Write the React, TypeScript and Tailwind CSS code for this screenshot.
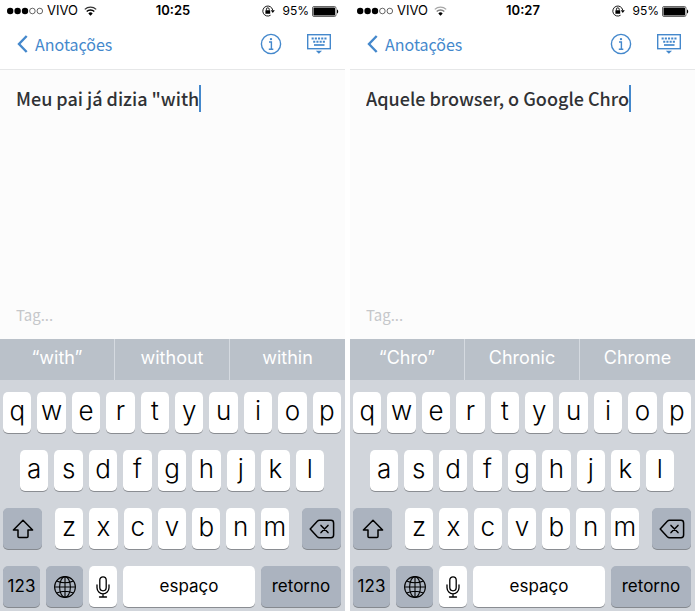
import { useState } from 'react'

const noteFont = "font-['Noto_Sans_CJK_SC','Noto_Sans',sans-serif]"

const phones = [
  {
    id: 'with',
    time: '10:25',
    note: 'Meu pai já dizia "with',
    suggestions: ['“with”', 'without', 'within'],
    weakSignal: false,
  },
  {
    id: 'chrome',
    time: '10:27',
    note: 'Aquele browser, o Google Chro',
    suggestions: ['“Chro”', 'Chronic', 'Chrome'],
    weakSignal: true,
  },
]

type PhoneData = (typeof phones)[number]

const SignalDots = () => (
  <svg width="37" height="8" viewBox="0 0 37 8" aria-hidden="true">
    <circle cx="3.2" cy="4" r="3.2" />
    <circle cx="10.6" cy="4" r="3.2" />
    <circle cx="18" cy="4" r="3.2" />
    <circle cx="25.4" cy="4" r="2.8" fill="none" stroke="black" strokeWidth="0.6" />
    <circle cx="32.8" cy="4" r="2.8" fill="none" stroke="black" strokeWidth="0.6" />
  </svg>
)

const WifiIcon = ({ weak }: { weak: boolean }) => (
  <svg width="13" height="10" viewBox="0 0 13 10" fill="none" stroke="black" aria-hidden="true">
    <path d="M0.8 3.4a8.2 8.2 0 0 1 11.4 0" strokeWidth="1.3" opacity={weak ? 0.35 : 0.8} />
    <path d="M2.7 5.6a5.4 5.4 0 0 1 7.6 0" strokeWidth="1.4" opacity={weak ? 0.5 : 1} />
    <path d="M4.3 7.4a3.2 3.2 0 0 1 4.4 0L6.5 9.7z" fill="black" stroke="none" />
  </svg>
)

const LockIcon = () => (
  <svg width="13" height="12" viewBox="0 0 13 12" aria-hidden="true">
    <path d="M10.7 5A5 5 0 1 0 8.6 10.2" fill="none" stroke="black" strokeWidth="0.9" />
    <path d="M8.8 5.2h4L10.8 8z" />
    <rect x="3.4" y="5.2" width="4.8" height="3.6" rx="0.4" />
    <path d="M4.4 5.4V4.2a1.4 1.4 0 0 1 2.8 0v1.2" fill="none" stroke="black" strokeWidth="0.9" />
  </svg>
)

const BatteryIcon = () => (
  <svg width="27" height="11" viewBox="0 0 27 11" aria-hidden="true">
    <rect x="0.5" y="0.5" width="23.5" height="10" rx="1.5" fill="none" stroke="black" strokeWidth="0.6" />
    <rect x="1.5" y="1.5" width="21.5" height="8" rx="0.6" />
    <path d="M25 3.5c1.6 0.4 1.6 3.6 0 4z" />
  </svg>
)

const BackIcon = () => (
  <svg width="11" height="18" viewBox="0 0 11 18" fill="none" stroke="currentColor" strokeWidth="2.4" aria-hidden="true">
    <path d="M9.7 1 2 9l7.7 8" />
  </svg>
)

const InfoIcon = () => (
  <svg width="22" height="22" viewBox="0 0 22 22" aria-hidden="true">
    <circle cx="11" cy="11" r="9.6" fill="none" stroke="currentColor" strokeWidth="1.4" />
    <circle cx="11" cy="6.1" r="1.2" fill="currentColor" />
    <path d="M9 9h2.4v7M8.8 16.2h4.5" fill="none" stroke="currentColor" strokeWidth="1.4" />
  </svg>
)

const HideKeyboardIcon = () => (
  <svg width="24" height="20" viewBox="0 0 24 20" fill="none" stroke="currentColor" aria-hidden="true">
    <rect x="0.7" y="0.7" width="22.6" height="14" strokeWidth="1.4" />
    <path d="M4.6 4.5h15M6.2 7.7h12" strokeWidth="2" strokeDasharray="2.1 1.1" />
    <path d="M7 11h10.5" strokeWidth="1.7" />
    <path d="M8.8 16.8h6.2l-3.1 3z" fill="currentColor" stroke="none" />
  </svg>
)

const ShiftIcon = () => (
  <svg width="22" height="20" viewBox="0 0 22 20" fill="none" stroke="black" strokeWidth="1.5" strokeLinejoin="round" aria-hidden="true">
    <path d="M11 1.2 20.6 11H16v6.6q0 1-1 1H7q-1 0-1-1V11H1.4z" />
  </svg>
)

const DeleteIcon = () => (
  <svg width="26" height="20" viewBox="0 0 26 20" fill="none" stroke="black" strokeWidth="1.5" strokeLinecap="round" strokeLinejoin="round" aria-hidden="true">
    <path d="M1.2 10 8.3 2.3q1-1 2.2-1H22q2.6 0 2.6 2.6v12.2q0 2.6-2.6 2.6H10.5q-1.2 0-2.2-1z" />
    <path d="m12 6.4 7 7.2m0-7.2-7 7.2" />
  </svg>
)

const GlobeIcon = () => (
  <svg width="24" height="24" viewBox="0 0 24 24" fill="none" stroke="black" strokeWidth="1.1" aria-hidden="true">
    <circle cx="12" cy="12" r="10.4" />
    <ellipse cx="12" cy="12" rx="5.4" ry="10.4" />
    <path d="M12 1.6v20.8M1.6 12h20.8M3.6 6q8.4 3.6 16.8 0M3.6 18q8.4-3.6 16.8 0" />
  </svg>
)

const MicIcon = () => (
  <svg width="14" height="22" viewBox="0 0 14 22" fill="none" stroke="black" strokeWidth="1.3" strokeLinecap="round" aria-hidden="true">
    <rect x="3.8" y="0.8" width="6.4" height="14" rx="3.2" />
    <path d="M1 9v2.8a6 6 0 0 0 12 0V9M7 17.8v3M3.5 21h7" />
  </svg>
)

const letterKey =
  'flex h-[41px] min-w-0 flex-1 items-center justify-center rounded-[5px] bg-white pb-1 text-[26px] leading-none font-light text-black shadow-[0_1px_0_#8a8d92]'
const actionKey =
  'flex h-[41px] shrink-0 items-center justify-center rounded-[5px] bg-[#abb3bf] text-[17px] text-black shadow-[0_1px_0_#85898f]'

const Letters = ({ letters }: { letters: string }) => (
  <>
    {letters.split('').map((letter) => (
      <button key={letter} type="button" className={letterKey}>
        {letter}
      </button>
    ))}
  </>
)

const Keyboard = () => (
  <div className="flex flex-col gap-[17px] bg-[#d1d5db] pt-3 pr-1 pb-1 pl-[3px]">
    <div className="flex gap-[6px]">
      <Letters letters="qwertyuiop" />
    </div>
    <div className="flex gap-[6px] px-[17px]">
      <Letters letters="asdfghjkl" />
    </div>
    <div className="flex gap-[13px]">
      <button type="button" aria-label="Shift" className={`${actionKey} w-[39px]`}>
        <ShiftIcon />
      </button>
      <div className="flex flex-1 gap-[6px]">
        <Letters letters="zxcvbnm" />
      </div>
      <button type="button" aria-label="Apagar" className={`${actionKey} w-[39px]`}>
        <DeleteIcon />
      </button>
    </div>
    <div className="flex gap-[6px]">
      <button type="button" className={`${actionKey} w-[37px]`}>123</button>
      <button type="button" aria-label="Idioma" className={`${actionKey} w-[37px]`}>
        <GlobeIcon />
      </button>
      <button
        type="button"
        aria-label="Ditado"
        className="flex h-[41px] w-7 shrink-0 items-center justify-center rounded-[5px] bg-white shadow-[0_1px_0_#8a8d92]"
      >
        <MicIcon />
      </button>
      <button
        type="button"
        className="h-[41px] flex-1 rounded-[5px] bg-white text-[17px] text-black shadow-[0_1px_0_#8a8d92]"
      >
        espaço
      </button>
      <button type="button" className={`${actionKey} w-20`}>retorno</button>
    </div>
  </div>
)

const Phone = ({ phone }: { phone: PhoneData }) => {
  const [note, setNote] = useState(phone.note)

  return (
    <section className="flex min-w-0 flex-1 flex-col bg-[#fcfcfc]">
      {/* Status bar */}
      <div className="grid h-[22px] grid-cols-[1fr_auto_1fr] items-center bg-white pr-[6px] pl-[7px] text-[13px] text-black">
        <div className="flex items-center gap-[3px]">
          <SignalDots />
          <span>VIVO</span>
          <span className="pl-[3px]">
            <WifiIcon weak={phone.weakSignal} />
          </span>
        </div>
        <span className="font-semibold">{phone.time}</span>
        <div className="flex items-center justify-end gap-[3px]">
          <LockIcon />
          <span className="pl-1 text-xs">95%</span>
          <BatteryIcon />
        </div>
      </div>

      {/* Navigation */}
      <nav className="flex h-12 items-center border-b border-[#e6e7e8] bg-white pr-[14px] pb-[3px] pl-[17px] text-[#4488cc]">
        <a href="#" className={`flex items-center gap-[7px] text-base leading-6 ${noteFont}`}>
          <BackIcon />
          Anotações
        </a>
        <div className="ml-auto flex items-center gap-[25px]">
          <button type="button" aria-label="Informações">
            <InfoIcon />
          </button>
          <button type="button" aria-label="Ocultar teclado">
            <HideKeyboardIcon />
          </button>
        </div>
      </nav>

      {/* Note */}
      <div className={`flex h-[269px] flex-col justify-between px-4 pt-[14px] pb-[13px] ${noteFont}`}>
        <div className="flex items-center">
          <input
            aria-label="Nota"
            value={note}
            onChange={(e) => setNote(e.target.value)}
            className="field-sizing-content h-7 text-lg font-medium text-[#303235] outline-none"
          />
          <span className="h-[27px] w-[2px] bg-[#4488cc]" />
        </div>
        <input
          aria-label="Tag"
          placeholder="Tag..."
          className="h-6 w-full text-[15px] text-[#303235] outline-none placeholder:text-[#c5c7ca]"
        />
      </div>

      {/* Suggestions */}
      <div className="grid h-[41px] grid-cols-3 divide-x divide-[#d5dae0] bg-[#bac1c9] text-lg text-white">
        {phone.suggestions.map((word) => (
          <button key={word} type="button" className="pb-1">
            {word}
          </button>
        ))}
      </div>

      <Keyboard />
    </section>
  )
}

const App = () => (
  <main className="flex gap-[5px] bg-white font-[Inter,sans-serif]">
    {phones.map((phone) => (
      <Phone key={phone.id} phone={phone} />
    ))}
  </main>
)

export default App
